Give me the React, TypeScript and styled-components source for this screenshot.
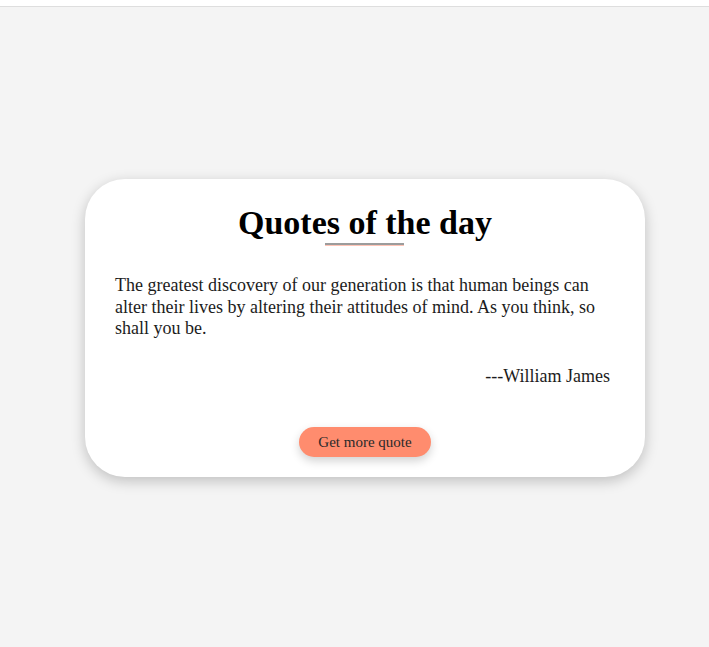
import React from "react";
import styled, { createGlobalStyle } from "styled-components";

const Global = createGlobalStyle`
  html, body { margin: 0; padding: 0; background: #f4f4f4; }
  body { font-family: "Liberation Serif", "DejaVu Serif", serif; }
`;

const TopStrip = styled.div`
  height: 6px;
  background: #ffffff;
  border-bottom: 1px solid #dedede;
`;

const Stage = styled.main`
  height: 640px;
  display: flex;
  align-items: center;
  justify-content: center;
  padding-left: 21px;
  padding-top: 2px;
  box-sizing: border-box;
`;

const Card = styled.section`
  width: 560px;
  height: 298px;
  box-sizing: border-box;
  background: #ffffff;
  border-radius: 40px;
  box-shadow: 0 4px 14px rgba(0, 0, 0, 0.22);
  padding: 22px 30px 20px 30px;
  display: flex;
  flex-direction: column;
`;

const Title = styled.h1`
  margin: 0;
  align-self: center;
  font-size: 34px;
  font-weight: 700;
  line-height: 44px;
  color: #000;
  position: relative;
  &::after {
    content: "";
    position: absolute;
    left: 87px;
    width: 79px;
    bottom: 0px;
    height: 2px;
    background: #9c9c9c;
    box-shadow: 0 1px 0 rgba(255, 138, 109, 0.5);
  }
`;

const Quote = styled.p`
  margin: 30px 5px 0 0;
  font-size: 18px;
  line-height: 21.5px;
  color: #1c1c1c;
`;

const Author = styled.p`
  margin: 25px 5px 0 0;
  text-align: right;
  font-size: 18px;
  line-height: 22px;
  color: #1c1c1c;
`;

const Actions = styled.div`
  margin-top: auto;
  display: flex;
  justify-content: center;
`;

const Button = styled.button`
  width: 132px;
  height: 30px;
  border: none;
  border-radius: 15px;
  background: #ff8c6e;
  color: #2a2a2a;
  font-family: inherit;
  font-size: 15px;
  box-shadow: 0 4px 10px rgba(0, 0, 0, 0.18);
  cursor: pointer;
`;

export default function App() {
  return (
    <>
      <Global />
      <TopStrip />
      <Stage>
        <Card>
          <Title>Quotes of the day</Title>
          <Quote>
            The greatest discovery of our generation is that human beings can alter their lives by
            altering their attitudes of mind. As you think, so shall you be.
          </Quote>
          <Author>---William James</Author>
          <Actions>
            <Button>Get more quote</Button>
          </Actions>
        </Card>
      </Stage>
    </>
  );
}
